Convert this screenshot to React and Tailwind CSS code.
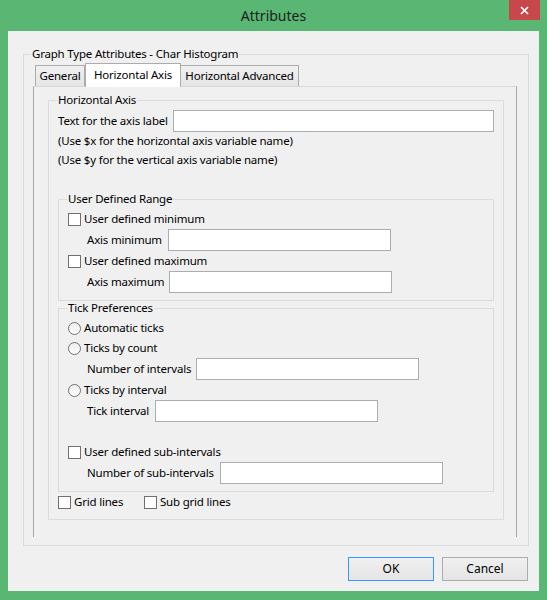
import React from 'react';

const font = "font-['Noto_Sans',sans-serif]";

const CheckBox = () => (
  <span className="w-[13px] h-[13px] shrink-0 border border-[#707070] bg-white" />
);

const RadioDot = () => (
  <span className="w-[13px] h-[13px] shrink-0 rounded-full border border-[#707070] bg-gradient-to-b from-[#ececec] to-white" />
);

const Group = ({ title, className = '', children }) => (
  <fieldset className={`border border-[#dcdcdc] px-[9px] pb-[7px] ${className}`}>
    <legend className="-ml-[1px] px-[1px] leading-[14px]">{title}</legend>
    {children}
  </fieldset>
);

const CheckRow = ({ label }) => (
  <div className="h-[20px] flex items-center gap-[3px] whitespace-nowrap">
    <CheckBox />
    <span>{label}</span>
  </div>
);

const RadioRow = ({ label }) => (
  <div className="h-[20px] flex items-center gap-[3px] whitespace-nowrap">
    <RadioDot />
    <span>{label}</span>
  </div>
);

const FieldRow = ({ label, labelWidth }) => (
  <div className="h-[22px] flex items-center pl-[19px] whitespace-nowrap">
    <span className={`${labelWidth} shrink-0`}>{label}</span>
    <input readOnly className="h-[22px] w-[223px] border border-[#abadb3] bg-white outline-none" />
  </div>
);

const tabs = ['General', 'Horizontal Axis', 'Horizontal Advanced'];

export default function App() {
  return (
    <div className={`w-[547px] h-[600px] bg-[#59b673] flex flex-col text-[11.5px] tracking-[-0.2px] text-black whitespace-nowrap ${font}`}>
      {/* Title bar */}
      <div className="h-[31px] shrink-0 grid grid-cols-[1fr_auto_1fr]">
        <div />
        <div className="leading-[31px] text-[14px] tracking-normal text-[#1e1e1e]">Attributes</div>
        <div className="flex justify-end items-start pr-[7px]">
          <button className="w-[31px] h-[20px] bg-[#c7474b] flex items-center justify-center">
            <svg width="9" height="9" viewBox="0 0 9 9">
              <path d="M1 1 L8 8 M8 1 L1 8" stroke="white" strokeWidth="1.7" />
            </svg>
          </button>
        </div>
      </div>

      {/* Client area */}
      <div className="flex-1 mx-[8px] mb-[9px] bg-[#f0f0f0] pl-[15px] pr-[10px] pt-[16px] flex flex-col">
        <fieldset className="border border-[#dcdcdc] pl-[9px] pr-[11px] pb-[8px]">
          <legend className="-ml-[2px] px-[1px] leading-[14px]">Graph Type Attributes - Char Histogram</legend>

          {/* Tab strip */}
          <div className="pt-[2px]">
            <div className="h-[23px] flex items-end pl-[2px]">
              <div className="w-[50px] h-[21px] border border-b-0 border-[#acacac] bg-gradient-to-b from-[#f0f0f0] to-[#e5e5e5] flex items-center justify-center">
                {tabs[0]}
              </div>
              <div className="relative z-10 w-[96px] h-[24px] -mb-[1px] border border-b-0 border-[#acacac] bg-white flex items-center justify-center pb-[2px]">
                {tabs[1]}
              </div>
              <div className="w-[118px] h-[21px] border border-l-0 border-b-0 border-[#acacac] bg-gradient-to-b from-[#f0f0f0] to-[#e5e5e5] flex items-center justify-center">
                {tabs[2]}
              </div>
            </div>

            {/* Tab page */}
            <div className="border-t border-l border-r border-t-[#d9d9d9] border-l-[#a9a9a9] border-r-[#a9a9a9] pt-[6px] pl-[14px] pr-[12px] pb-[17px]">
              <Group title="Horizontal Axis">
                <div className="pt-[3px]">
                  <div className="h-[22px] flex items-center">
                    <span className="w-[115px] shrink-0">Text for the axis label</span>
                    <input readOnly className="h-[22px] flex-1 min-w-0 border border-[#abadb3] bg-white outline-none" />
                  </div>
                  <div className="h-[18px] leading-[18px]">(Use $x for the horizontal axis variable name)</div>
                  <div className="h-[20px] leading-[20px]">(Use $y for the vertical axis variable name)</div>
                </div>

                <Group title="User Defined Range" className="mt-[22px]">
                  <div className="pt-[3px]">
                    <CheckRow label="User defined minimum" />
                    <FieldRow label="Axis minimum" labelWidth="w-[81px]" />
                    <CheckRow label="User defined maximum" />
                    <FieldRow label="Axis maximum" labelWidth="w-[82px]" />
                  </div>
                </Group>

                <Group title="Tick Preferences">
                  <div className="pt-[3px]">
                    <RadioRow label="Automatic ticks" />
                    <RadioRow label="Ticks by count" />
                    <FieldRow label="Number of intervals" labelWidth="w-[109px]" />
                    <RadioRow label="Ticks by interval" />
                    <FieldRow label="Tick interval" labelWidth="w-[68px]" />
                    <div className="h-[20px]" />
                    <CheckRow label="User defined sub-intervals" />
                    <FieldRow label="Number of sub-intervals" labelWidth="w-[133px]" />
                  </div>
                </Group>

                <div className="h-[20px] flex items-center">
                  <div className="w-[86px] flex items-center gap-[3px]">
                    <CheckBox />
                    <span>Grid lines</span>
                  </div>
                  <div className="flex items-center gap-[3px]">
                    <CheckBox />
                    <span>Sub grid lines</span>
                  </div>
                </div>
              </Group>
            </div>
          </div>
        </fieldset>

        {/* Buttons */}
        <div className="mt-[11px] pr-[1px] flex justify-end gap-[8px] text-[12px] tracking-normal">
          <button className="w-[86px] h-[24px] border border-[#3399ff] bg-gradient-to-b from-[#f0f0f0] to-[#e5e5e5]">OK</button>
          <button className="w-[86px] h-[24px] border border-[#acacac] bg-gradient-to-b from-[#f0f0f0] to-[#e5e5e5]">Cancel</button>
        </div>
      </div>
    </div>
  );
}
